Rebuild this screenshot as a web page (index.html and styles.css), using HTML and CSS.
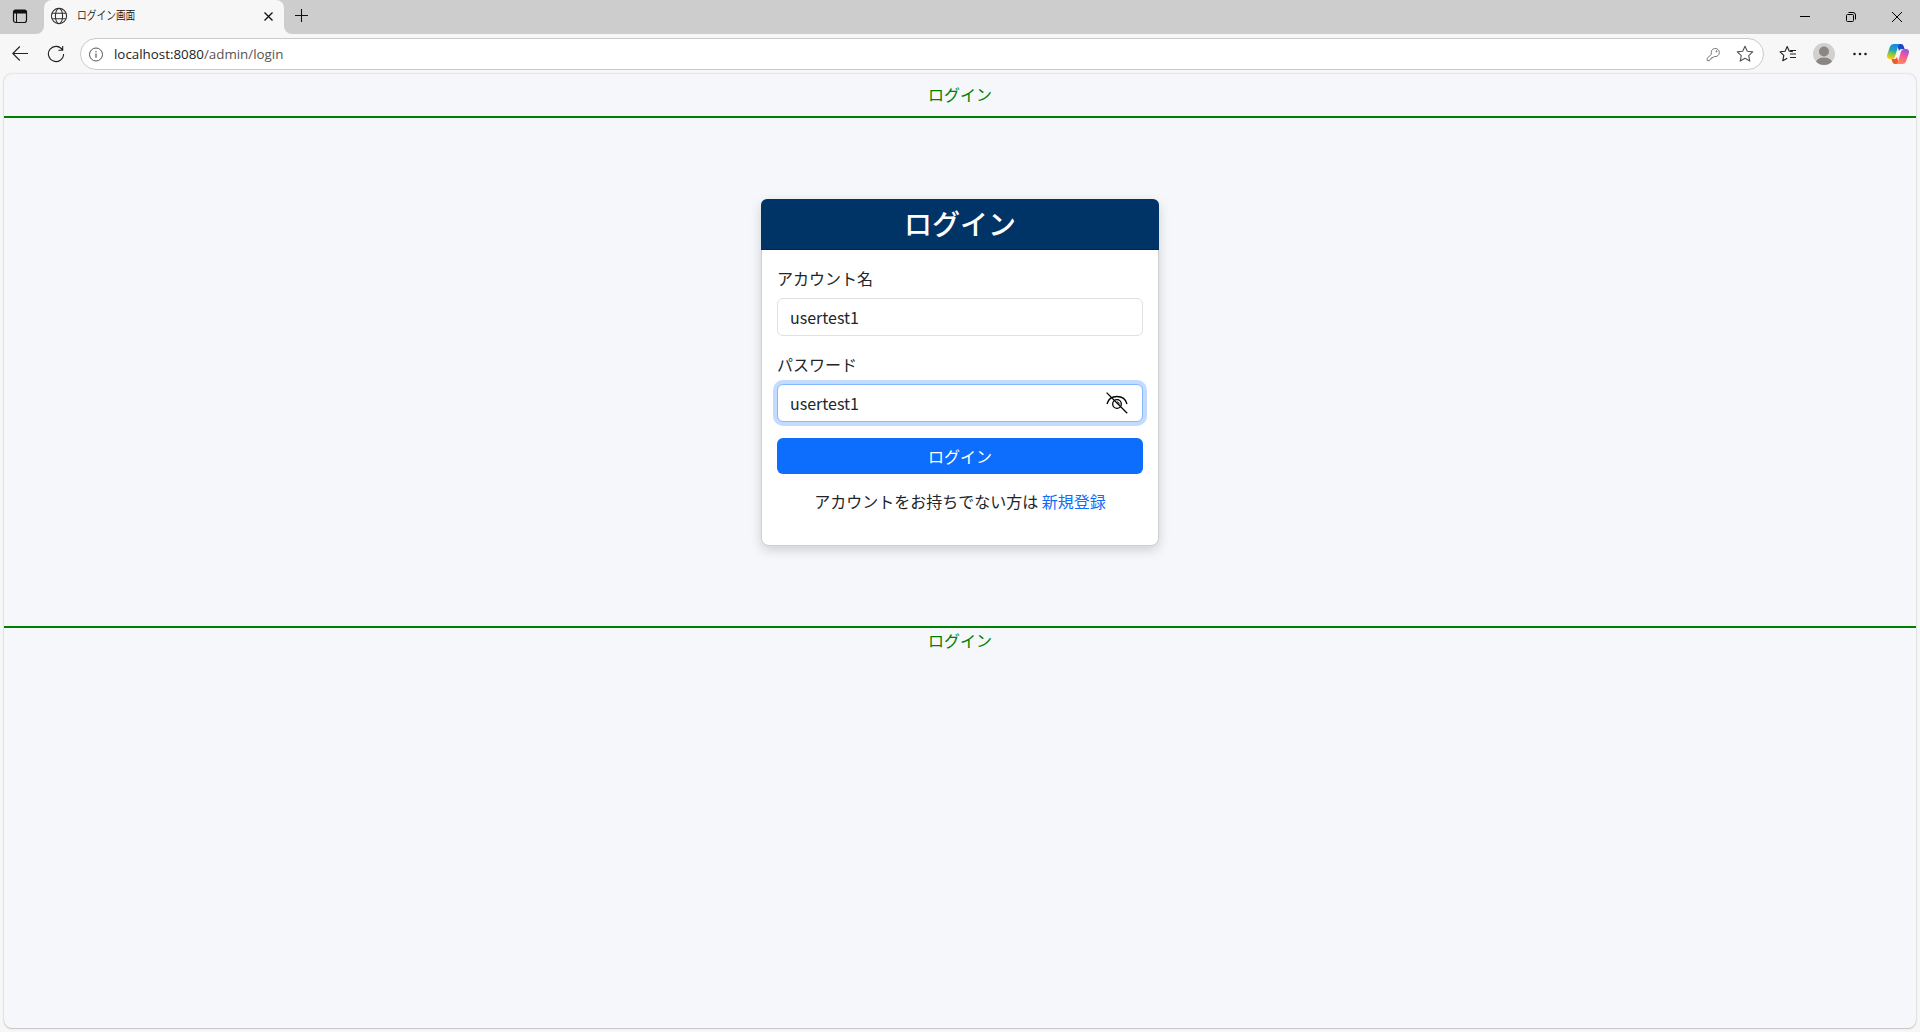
FILE: index.html
```html
<!DOCTYPE html>
<html lang="ja">
<head>
<meta charset="utf-8">
<title>ログイン画面</title>
<link rel="stylesheet" href="styles.css">
</head>
<body>
<div class="tabbar">
  <div class="tab-menu"><svg width="16" height="16" viewBox="0 0 16 16"><rect x="1.5" y="2.5" width="13" height="12" rx="2.2" fill="none" stroke="#111" stroke-width="1.2"/><path d="M1 5.500V4a2.500 2.500 0 0 1 2.500-2.500h9A2.500 2.500 0 0 1 15 4v1.500z" fill="#111"/><path d="M4.500 5v9.500" stroke="#111"/></svg></div>
  <div class="tab">
    <svg width="18" height="18" viewBox="0 0 18 18" fill="none" stroke="#333" stroke-width="1.1"><circle cx="9" cy="9" r="7.600"/><ellipse cx="9" cy="9" rx="3.600" ry="7.600"/><path d="M2 6.300h14M2 11.700h14"/></svg>
    <span class="tab-title">ログイン画面</span>
    <svg class="tab-close" width="10" height="10" viewBox="0 0 10 10" stroke="#111" stroke-width="1.300"><path d="M.5 1.500l8 8M8.500 1.500l-8 8"/></svg>
  </div>
  <div class="tab-rest">
    <svg width="14" height="14" viewBox="0 0 14 14" stroke="#111" stroke-width="1.100"><path d="M6.500 0v13M0 6.500h13"/></svg>
    <div class="window-buttons">
      <svg width="10" height="10" viewBox="0 0 10 10"><path d="M0 4.500h10" stroke="#000"/></svg>
      <svg width="10" height="10" viewBox="0 0 10 10" fill="none" stroke="#000"><rect x=".5" y="2.500" width="7" height="7" rx="1"/><path d="M2.500.5H7a2.500 2.500 0 0 1 2.500 2.500v4.500"/></svg>
      <svg width="10" height="10" viewBox="0 0 10 10" stroke="#000"><path d="M0 0l10 10M10 0L0 10"/></svg>
    </div>
  </div>
</div>
<div class="toolbar">
  <svg width="16" height="16" viewBox="0 0 16 16" fill="none" stroke="#222" stroke-width="1.100"><path d="M16 7.500H.8M7.800.5l-7 7 7 7"/></svg>
  <svg class="reload" width="18" height="18" viewBox="0 0 18 18" fill="none" stroke="#222" stroke-width="1.100"><path d="M15.500 5A7.600 7.600 0 1 0 16.600 9M15.700 1v4.300h-4.300"/></svg>
  <div class="address">
    <svg width="15" height="15" viewBox="0 0 15 15" fill="none" stroke="#555"><circle cx="7" cy="7.500" r="6.500"/><path d="M7 6.500v4.300M7 4v1.300" stroke-width="1.200"/></svg>
    <span class="url">localhost:8080<span>/admin/login</span></span>
    <svg class="key" width="15" height="15" viewBox="0 0 15 15" fill="none" stroke="#777" stroke-linejoin="round"><path d="M5.500 7.200A4.100 4.100 0 1 1 8.200 9.500L7 10.500H5.800v1.200H4.600L3.500 13.600H1.200v-2.300z"/><circle cx="10.500" cy="4.300" r=".6"/></svg>
    <svg width="18" height="18" viewBox="0 0 18 18" fill="none" stroke="#555" stroke-width="1.100" stroke-linejoin="round"><path d="M9 1.300l2.300 5 5.400.6-4 3.700 1.100 5.500L9 13.300l-4.800 2.800 1.100-5.500-4-3.700 5.400-.6z"/></svg>
  </div>
  <svg class="favorites" width="18" height="18" viewBox="0 0 18 18" fill="none" stroke="#222" stroke-width="1.100" stroke-linejoin="round"><path d="M10.300 6.200L8.200 1.500 6.100 6.200l-5 .6 3.700 3.600-1 5.300 4.400-2.500M10.300 6.200l3.500.4M11 9H17M11 12.500H17M11 5.500H17"/></svg>
  <svg class="profile" width="22" height="22" viewBox="0 0 22 22"><defs><clipPath id="avatar"><circle cx="11" cy="11" r="11"/></clipPath></defs><g clip-path="url(#avatar)"><rect width="22" height="22" fill="#d2d0ce"/><circle cx="11" cy="8.500" r="5" fill="#8a8684"/><ellipse cx="11" cy="19.500" rx="8" ry="5" fill="#8a8684"/></g></svg>
  <svg class="more" width="14" height="4" viewBox="0 0 14 4" fill="#222"><circle cx="1.500" cy="2" r="1.300"/><circle cx="7" cy="2" r="1.300"/><circle cx="12.500" cy="2" r="1.300"/></svg>
  <svg class="copilot" width="22" height="20" viewBox="0 0 22 20"><defs><linearGradient id="cool" x1=".5" y1="0" x2=".3" y2="1"><stop offset="0" stop-color="#1687e8"/><stop offset=".4" stop-color="#21a6b8"/><stop offset=".7" stop-color="#9bc638"/><stop offset="1" stop-color="#ffcd0f"/></linearGradient><linearGradient id="warm" x1=".7" y1="0" x2=".4" y2="1"><stop offset="0" stop-color="#a04be8"/><stop offset=".5" stop-color="#f65b93"/><stop offset="1" stop-color="#ff8b55"/></linearGradient></defs><path d="M10 0h4q2 0 2.600 2l1 3h-3q-2 0-2.600 2z" fill="#1748c5"/><path d="M12 20H8q-2 0-2.600-2l-1-3h3q2 0 2.600-2z" fill="#f05a28"/><path d="M6.500 0H13q-1.500.5-2 2.500L8 12.500Q7.300 15 5 15H3Q-1 15 .3 10.500L3 2.500Q4 0 6.500 0z" fill="url(#cool)"/><path d="M15.500 20H9q1.500-.5 2-2.500L14 7.500Q14.700 5 17 5h2q4 0 2.700 4.500L19 17.500q-1 2.500-3.500 2.500z" fill="url(#warm)"/></svg>
</div>
<div class="page">
  <header class="page-header">ログイン</header>
  <main>
    <section class="card">
      <h1>ログイン</h1>
      <form class="card-body">
        <label for="account">アカウント名</label>
        <input id="account" class="field" type="text" value="usertest1">
        <label>パスワード</label>
        <div class="field focused"><span>usertest1</span>
          <svg width="22" height="22" viewBox="0 0 22 22" fill="none" stroke="#000" stroke-width="1.300"><path d="M1 12C2.200 7.300 6 4.500 11 4.500s8.800 2.800 10 7.500M.6.600l20.600 20.600"/><circle cx="11" cy="12" r="4.300"/><path d="M11 9.800a2.400 2.400 0 0 1 2.200 2.600" stroke-width=".9"/></svg>
        </div>
        <button type="button">ログイン</button>
        <p>アカウントをお持ちでない方は <a>新規登録</a></p>
      </form>
    </section>
  </main>
  <footer>ログイン</footer>
</div>
</body>
</html>
```
FILE: styles.css
```css
* { box-sizing: border-box; }
body {
  margin: 0;
  height: 1032px;
  display: flex;
  flex-direction: column;
  overflow: hidden;
  background: #f7f7f7;
  font: 16px/24px "Noto Sans CJK JP", sans-serif;
  color: #212529;
}
svg { display: block; flex: none; }
/* The lower half of the strip shows the toolbar colour behind the rounded corners beside the tab. */
.tabbar { height: 34px; display: flex; background: linear-gradient(#cdcdcd 20px, #f7f7f7 20px); }
.tab-menu { width: 44px; padding: 8px 0 0 12px; background: #cdcdcd; border-bottom-right-radius: 8px; }
.tab { width: 240px; display: flex; align-items: center; padding: 0 10px 2px 6px; background: #f7f7f7; border-radius: 8px 8px 0 0; }
.tab-title { width: 80px; margin: 0 0 2px 9px; font-size: 12px; line-height: 16px; font-weight: 350; transform: scaleX(.81); transform-origin: left; color: #111; }
.tab-close { margin-left: auto; }
.tab-rest { flex: 1; display: flex; justify-content: space-between; padding: 9px 18px 0 11px; background: #cdcdcd; border-bottom-left-radius: 8px; }
.window-buttons { padding-top: 3px; display: flex; gap: 36px; }
.toolbar { height: 40px; display: flex; align-items: center; padding: 0 11px 0 12px; }
.reload { margin-left: 19px; }
.address { width: 1684px; height: 32px; margin-left: 15px; padding: 0 9px 0 8px; display: flex; align-items: center; border: 1px solid #cacaca; border-radius: 16px; background: #fff; }
.url { margin: 0 auto 0 10px; font: 13.35px/18px "Open Sans", sans-serif; color: #222; }
.url span { color: #555; }
.key { margin-right: 15px; }
.favorites { margin-left: 15px; }
.profile { margin-left: 16px; }
.more { margin-left: 18px; }
.copilot { margin-left: auto; }
.page { width: 1912px; height: 954px; margin: 0 auto; border-radius: 8px; background: #f5f7fb; box-shadow: 0 0 2px #bbb, 0 1px 1px #ccc; }
.page-header { height: 44px; padding-top: 8px; text-align: center; color: green; border-bottom: 2px solid green; }
main { padding: 81px 0 80px; display: flex; justify-content: center; }
.card { width: 398px; height: 347px; background: #fff; border: 1px solid #cfd0d2; border-radius: 8px; box-shadow: 0 4px 12px rgba(0,0,0,.16); }
.card h1 { margin: -1px -1px 0; height: 51px; padding-top: 7px; font-size: 28px; line-height: 34px; font-weight: 500; text-align: center; color: #fff; background: #036; border-bottom: 1px solid #002b57; border-radius: 6px 6px 0 0; }
.card-body { padding: 16px 15px; }
label { display: block; margin-bottom: 8px; }
.field { display: flex; align-items: center; width: 100%; height: 38px; padding: 0 12px; margin-bottom: 16px; font: inherit; color: inherit; background: #fff; border: 1px solid #dee2e6; border-radius: 6px; outline: none; }
.focused { justify-content: space-between; padding-right: 14px; border-color: #86b7fe; box-shadow: 0 0 0 4px #c2dbfe; }
button { display: block; width: 100%; height: 36px; padding: 0; border: 0; border-radius: 6px; font: inherit; color: #fff; background: #0d6efd; }
p { margin: 15px 0 0; text-align: center; }
a { color: #0d6efd; }
footer { border-top: 2px solid green; text-align: center; color: green; }
```
